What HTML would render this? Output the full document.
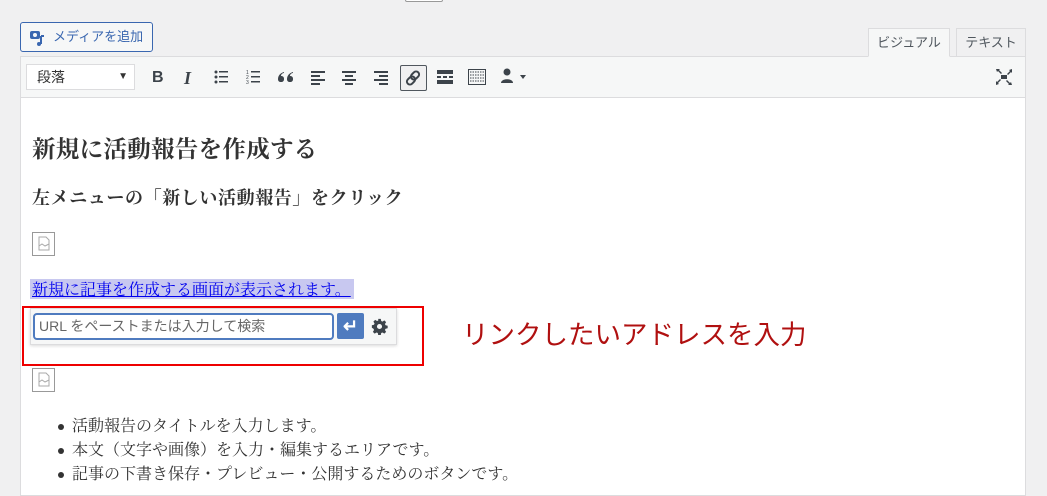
<!DOCTYPE html>
<html><head><meta charset="utf-8"><style>
*{box-sizing:border-box;margin:0;padding:0}
body{width:1047px;height:490px;background:#f0f0f1;position:relative;overflow:hidden;font-family:"Liberation Sans","Noto Sans CJK JP",sans-serif;color:#333}
.abs{position:absolute}
.media{left:20px;top:22px;width:133px;height:30px;border:1px solid #3a67b0;border-radius:3px;background:#f6f7f7;color:#3a67b0;font-size:13px;line-height:28px;padding-left:32px}
.tab{top:28px;height:29px;border:1px solid #dcdcde;font-size:13px;color:#50575e;text-align:center;line-height:27px}
.editor{left:20px;top:56px;width:1006px;height:440px;border:1px solid #dcdcde;background:#fff}
.tb{left:0;top:0;width:1004px;height:41px;background:#f6f7f7;border-bottom:1px solid #dcdcde}
.sel{left:5px;top:7px;width:109px;height:26px;border:1px solid #dcdcde;background:#fff;font-size:14px;line-height:24px;padding-left:10px;color:#333}
.ic{color:#3c434a;font-size:16px;font-weight:bold;line-height:16px}
.serif{font-family:"Liberation Serif","Noto Serif CJK JP",serif;color:#333}
li{list-style:none;position:relative}
li:before{content:"";position:absolute;left:-14px;top:9px;width:6px;height:6px;border-radius:50%;background:#333}
.img{width:23px;height:24px;border:1px solid #999;background:#fff}
</style></head><body>
<div class="abs" style="left:405px;top:-2px;width:38px;height:4px;border:1px solid #999;border-radius:2px;background:#fff"></div>
<div class="abs media"><svg class="abs" style="left:8px;top:6px" width="18" height="18" viewBox="0 0 18 18"><rect x="1" y="2" width="10" height="8" rx="2" fill="#3a67b0"/><circle cx="6" cy="6" r="2" fill="#f6f7f7"/><path d="M12 7v8" stroke="#3a67b0" stroke-width="2"/><circle cx="10" cy="15" r="2" fill="#3a67b0"/><path d="M12 7h3" stroke="#3a67b0" stroke-width="2"/></svg>メディアを追加</div>
<div class="abs tab" style="left:868px;width:82px;background:#f6f7f7;border-bottom-color:#f6f7f7;z-index:2">ビジュアル</div>
<div class="abs tab" style="left:956px;width:70px;background:#f0f0f1">テキスト</div>
<div class="abs editor">
 <div class="abs tb">
  <div class="abs sel">段落<span class="abs" style="right:6px;top:0;font-size:10px">▼</span></div>
  <span class="abs ic" style="left:131px;top:13px">B</span>
  <span class="abs ic" style="left:163px;top:13px;font-style:italic;font-family:'Liberation Serif',serif;font-size:18px">I</span>
  <svg class="abs" style="left:193px;top:12px" width="16" height="16"><g fill="#3c434a"><circle cx="2" cy="3" r="1.5"/><circle cx="2" cy="8" r="1.5"/><circle cx="2" cy="13" r="1.5"/><rect x="5" y="2" width="9" height="1.5"/><rect x="5" y="7" width="9" height="1.5"/><rect x="5" y="12" width="9" height="1.5"/></g></svg>
  <svg class="abs" style="left:225px;top:12px" width="16" height="16"><g fill="#3c434a"><text x="0" y="5" font-size="5">1</text><text x="0" y="10" font-size="5">2</text><text x="0" y="15" font-size="5">3</text><rect x="5" y="2" width="9" height="1.5"/><rect x="5" y="7" width="9" height="1.5"/><rect x="5" y="12" width="9" height="1.5"/></g></svg>
  <svg class="abs" style="left:257px;top:14px" width="16" height="12" fill="#3c434a"><path d="M6 1C2 2 0 5 0 8c0 2 1 3 3 3s3-1 3-3-1-3-3-3c0-2 2-3 3-3zM15 1c-4 1-6 4-6 7 0 2 1 3 3 3s3-1 3-3-1-3-3-3c0-2 2-3 3-3z"/></svg>
  <svg class="abs" style="left:289px;top:12px" width="16" height="16" fill="#3c434a"><rect x="1" y="2" width="14" height="2"/><rect x="1" y="6" width="9" height="2"/><rect x="1" y="10" width="14" height="2"/><rect x="1" y="14" width="9" height="2"/></svg>
  <svg class="abs" style="left:320px;top:12px" width="16" height="16" fill="#3c434a"><rect x="1" y="2" width="14" height="2"/><rect x="4" y="6" width="8" height="2"/><rect x="1" y="10" width="14" height="2"/><rect x="4" y="14" width="8" height="2"/></svg>
  <svg class="abs" style="left:352px;top:12px" width="16" height="16" fill="#3c434a"><rect x="1" y="2" width="14" height="2"/><rect x="6" y="6" width="9" height="2"/><rect x="1" y="10" width="14" height="2"/><rect x="6" y="14" width="9" height="2"/></svg>
  <div class="abs" style="left:379px;top:8px;width:27px;height:26px;border:1px solid #50575e;border-radius:2px;background:#f0f0f1"></div>
  <svg class="abs" style="left:384px;top:13px" width="16" height="16" fill="none" stroke="#3c434a" stroke-width="2"><rect x="7" y="1" width="6" height="9" rx="3" transform="rotate(45 10 5.5)"/><rect x="3" y="6" width="6" height="9" rx="3" transform="rotate(45 6 10.5)"/></svg>
  <svg class="abs" style="left:416px;top:12px" width="16" height="16" fill="#3c434a"><rect x="0" y="1" width="16" height="4"/><rect x="0" y="7" width="4" height="2"/><rect x="6" y="7" width="4" height="2"/><rect x="12" y="7" width="4" height="2"/><rect x="0" y="11" width="16" height="4"/></svg>
  <svg class="abs" style="left:447px;top:11px" width="18" height="18" fill="none" stroke="#3c434a"><rect x="0.5" y="1.5" width="17" height="15"/><path d="M2 4h14M2 7h14M2 10h14M2 13h14" stroke-dasharray="1.5 1"/></svg>
  <svg class="abs" style="left:479px;top:11px" width="26" height="18" fill="#3c434a"><circle cx="7" cy="4" r="3.5"/><path d="M1 15c0-5 12-5 12 0z"/><path d="M20 7h6l-3 4z"/></svg>
  <svg class="abs" style="left:975px;top:12px" width="16" height="16" fill="#3c434a"><rect x="5" y="6" width="6" height="4"/><path d="M0 0h4l-1 1 3 3-1 1-3-3-1 1zM16 0v4l-1-1-3 3-1-1 3-3-1-1zM0 16v-4l1 1 3-3 1 1-3 3 1 1zM16 16h-4l1-1-3-3 1-1 3 3 1-1z"/></svg>
 </div>
 <div class="abs serif" style="left:11px;top:73px;font-size:23.5px;font-weight:bold;letter-spacing:0.3px">新規に活動報告を作成する</div>
 <div class="abs serif" style="left:11px;top:127px;font-size:18px;font-weight:bold;letter-spacing:0.6px">左メニューの「新しい活動報告」をクリック</div>
 <div class="abs img" style="left:11px;top:175px"><svg width="21" height="22"><path d="M6 4h7l3 3v10H6z M6 13l3-2 3 2 4-2" fill="none" stroke="#aaa"/></svg></div>
 <div class="abs" style="left:9px;top:222px;width:324px;height:20px;background:#c8c8f0"></div>
 <div class="abs serif" style="left:11px;top:220px;font-size:16px;color:#0000ee;text-decoration:underline">新規に記事を作成する画面が表示されます。</div>
 <div class="abs" style="left:9px;top:251px;width:367px;height:37px;background:#f6f7f7;border:1px solid #dcdcde;box-shadow:0 1px 3px rgba(0,0,0,.15)"></div>
 <div class="abs" style="left:12px;top:256px;width:301px;height:27px;border:2px solid #4f7bbf;border-radius:4px;background:#fff;font-size:14px;color:#666;line-height:23px;padding-left:4px">URL をペーストまたは入力して検索</div>
 <div class="abs" style="left:316px;top:256px;width:27px;height:26px;background:#4f7bbf;border-radius:2px;color:#fff;font-size:18px;text-align:center;line-height:26px;font-weight:bold">↵</div>
 <svg class="abs" style="left:350px;top:261px" width="17" height="17" viewBox="0 0 20 20"><path fill="#3c434a" d="M8.5 1h3l.5 2.5 1.5.7 2.2-1.4 2.1 2.1-1.4 2.2.7 1.5 2.5.5v3l-2.5.5-.7 1.5 1.4 2.2-2.1 2.1-2.2-1.4-1.5.7-.5 2.5h-3l-.5-2.5-1.5-.7-2.2 1.4-2.1-2.1 1.4-2.2-.7-1.5L1 11.5v-3l2.5-.5.7-1.5-1.4-2.2 2.1-2.1 2.2 1.4 1.5-.7zM10 7a3 3 0 100 6 3 3 0 000-6z"/></svg>
 <div class="abs img" style="left:11px;top:311px"><svg width="21" height="22"><path d="M6 4h7l3 3v10H6z M6 13l3-2 3 2 4-2" fill="none" stroke="#aaa"/></svg></div>
 <ul class="abs serif" style="left:51px;top:358px;font-size:16px;line-height:24px">
  <li>活動報告のタイトルを入力します。</li>
  <li>本文（文字や画像）を入力・編集するエリアです。</li>
  <li>記事の下書き保存・プレビュー・公開するためのボタンです。</li>
 </ul>
</div>
<div class="abs" style="left:22px;top:306px;width:402px;height:60px;border:2px solid #e00"></div>
<div class="abs" style="left:462px;top:313px;font-size:26.5px;color:#b01010">リンクしたいアドレスを入力</div>
</body></html>
